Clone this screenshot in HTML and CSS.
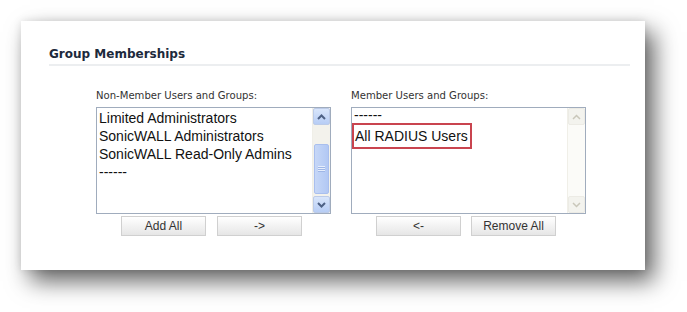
FILE: index.html
```html
<!DOCTYPE html>
<html lang="en">
<head>
    <meta charset="UTF-8">
    <title>Group Memberships</title>
    <link rel="stylesheet" href="styles.css">
</head>
<body>
    <div class="panel">
        <h3 class="section-title">Group Memberships</h3>
        <div class="columns">
            <div class="column">
                <div class="list-label">Non-Member Users and Groups:</div>
                <div class="listbox">
                    <div class="items">
                        <div class="item">Limited Administrators</div>
                        <div class="item">SonicWALL Administrators</div>
                        <div class="item">SonicWALL Read-Only Admins</div>
                        <div class="item">------</div>
                    </div>
                    <div class="scrollbar">
                        <div class="arrow">
                            <svg width="9" height="6" viewBox="0 0 9 6"><path d="M1 5 L4.5 1.5 L8 5" fill="none" stroke="#4d6185" stroke-width="2"/></svg>
                        </div>
                        <div class="track">
                            <div class="thumb"><span class="grip"></span></div>
                        </div>
                        <div class="arrow">
                            <svg width="9" height="6" viewBox="0 0 9 6"><path d="M1 1 L4.5 4.5 L8 1" fill="none" stroke="#4d6185" stroke-width="2"/></svg>
                        </div>
                    </div>
                </div>
                <div class="buttons">
                    <button>Add All</button>
                    <button>-&gt;</button>
                </div>
            </div>
            <div class="column">
                <div class="list-label">Member Users and Groups:</div>
                <div class="listbox">
                    <div class="items">
                        <div class="item dash">------</div>
                        <div class="item marked">All RADIUS Users</div>
                    </div>
                    <div class="scrollbar disabled">
                        <div class="arrow">
                            <svg width="9" height="6" viewBox="0 0 9 6"><path d="M1 5 L4.5 1.5 L8 5" fill="none" stroke="#c9c7ba" stroke-width="1.5"/></svg>
                        </div>
                        <div class="track"></div>
                        <div class="arrow">
                            <svg width="9" height="6" viewBox="0 0 9 6"><path d="M1 1 L4.5 4.5 L8 1" fill="none" stroke="#c9c7ba" stroke-width="1.5"/></svg>
                        </div>
                    </div>
                </div>
                <div class="buttons">
                    <button>&lt;-</button>
                    <button>Remove All</button>
                </div>
            </div>
        </div>
    </div>
</body>
</html>
```

FILE: styles.css
```css
html {
    background: #fff;
}
body {
    margin: 0;
    height: 312px;
    box-sizing: border-box;
    padding: 21px 0 0 21px;
    background: #fff;
    font-family: 'DejaVu Sans', sans-serif;
}
.panel {
    width: 624px;
    height: 249px;
    box-sizing: border-box;
    background: #fff;
    padding: 26px 15px 0 28px;
    box-shadow: 9px 11px 22px rgba(0, 0, 0, 0.62), 0 0 8px rgba(0, 0, 0, 0.1);
}
.section-title {
    margin: 0;
    font-family: 'DejaVu Sans', sans-serif;
    font-size: 12px;
    font-weight: bold;
    color: #1d2a3c;
    padding-bottom: 3px;
    border-bottom: 2px solid #eceef0;
}
.columns {
    display: flex;
    gap: 20px;
    margin: 23px 0 0 47px;
}
.column {
    width: 235px;
}
.list-label {
    font-family: 'DejaVu Sans Condensed', 'DejaVu Sans', sans-serif;
    font-size: 11.2px;
    color: #333;
    margin-bottom: 5px;
}
.listbox {
    display: flex;
    height: 107px;
    box-sizing: border-box;
    border: 1px solid #a0acbd;
    background: #fff;
}
.items {
    flex: 1;
    padding: 1px 0 0 2px;
    font-family: 'Liberation Sans', Arial, sans-serif;
    font-size: 14px;
    color: #111;
}
.item {
    height: 18px;
    line-height: 18px;
}
.dash {
    height: 14px;
    line-height: 12px;
}
.marked {
    display: inline-block;
    padding: 0 2px 0 1px;
    height: 22px;
    line-height: 22px;
    border: 2px solid #c9444f;
    margin-left: -2px;
}
.scrollbar {
    width: 17px;
    display: flex;
    flex-direction: column;
    background: #f3f2ec;
    border-left: 1px solid #f0efe8;
}
.arrow {
    height: 17px;
    box-sizing: border-box;
    display: flex;
    align-items: center;
    justify-content: center;
    background: linear-gradient(#d9e6fb, #b7cdf5);
    border: 1px solid #bccbe8;
    border-radius: 2px;
}
.track {
    flex: 1;
    display: flex;
    flex-direction: column;
    justify-content: flex-end;
    padding-bottom: 2px;
}
.thumb {
    height: 48px;
    margin: 0 1px;
    border-radius: 2px;
    background: linear-gradient(90deg, #c6d7f7, #b2c8f4);
    border: 1px solid #a9bfee;
    display: flex;
    align-items: center;
    justify-content: center;
}
.grip {
    width: 7px;
    height: 6px;
    background: repeating-linear-gradient(#e6eefc 0 1px, #9fb6e6 1px 2px);
}
.scrollbar.disabled {
    background: #fbfbf8;
}
.disabled .arrow {
    background: #f3f3ee;
    border-color: #ecebe5;
}
.buttons {
    display: flex;
    gap: 11px;
    padding-left: 25px;
    margin-top: 2px;
}
.column + .column .buttons {
    gap: 10px;
}
button {
    width: 85px;
    height: 20px;
    padding: 0;
    border: 1px solid #d0d0d0;
    border-radius: 0;
    background: linear-gradient(#ffffff, #e6e6e6);
    font-family: 'Liberation Sans', Arial, sans-serif;
    font-size: 12px;
    color: #333;
}
```
